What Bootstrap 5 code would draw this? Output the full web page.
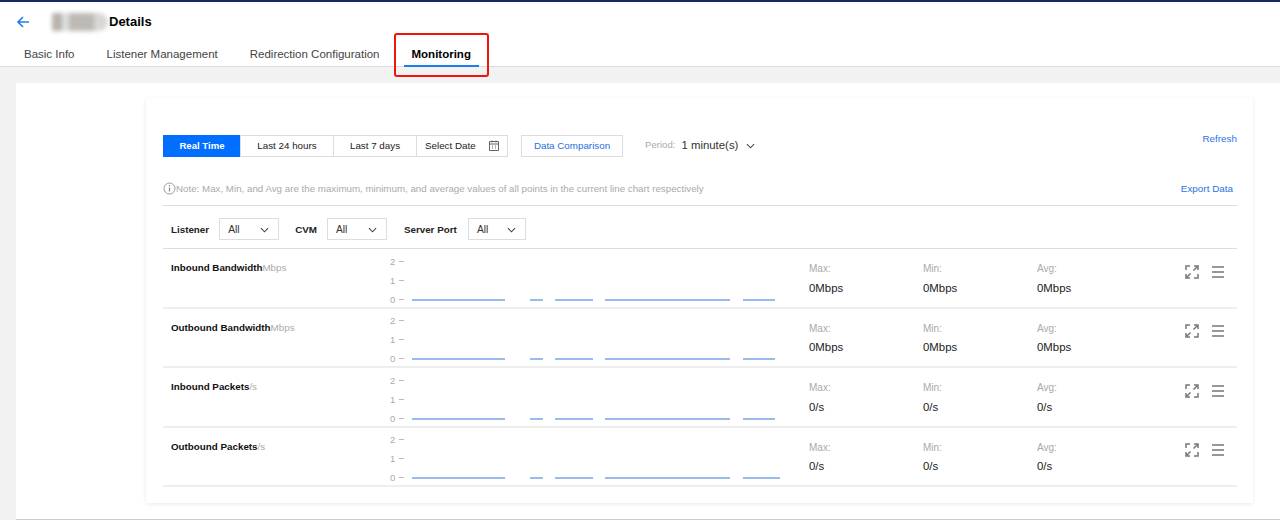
<!DOCTYPE html>
<html lang="en">
<head>
    <meta charset="UTF-8">
    <title>Details</title>
    <link href="https://cdn.jsdelivr.net/npm/bootstrap@5.3.0/dist/css/bootstrap.min.css" rel="stylesheet">
    <style>
        html, body { height: 520px; overflow: hidden; }
        body {
            background: #f2f2f2;
            font-family: "Liberation Sans", Arial, sans-serif;
            font-size: 11.4px;
            color: #000;
        }
        .top-head { height: 67px; background: #fff; border-top: 2px solid #1b2a5e; border-bottom: 1px solid #dcdcdc; }
        .title-line { height: 39px; padding-left: 16px; padding-top: 1px; }
        .back-arrow { width: 14px; height: 14px; margin-right: 22px; }
        .blur-name { width: 56px; height: 18px; border-radius: 2px 9px 9px 2px; background: linear-gradient(90deg, #b8b2ad 0 18%, #dde0df 18% 30%, #bdb9b5 30% 75%, #d9d7d5 75%); filter: blur(2px); }
        .page-title { font-size: 13px; font-weight: 700; margin-left: 1px; }
        .tab-row { padding-left: 16px; gap: 16px; font-size: 11.5px; }
        .tab-item { padding: 0 8px; height: 26px; line-height: 27px; color: #444; position: relative; white-space: nowrap; }
        .tab-item.on { color: #000; font-weight: 700; border-bottom: 2px solid #1f7cf0; }
        .tab-item.on::after {
            content: "";
            position: absolute;
            left: -10px; right: -10px; top: -8px; bottom: -12px;
            border: 2px solid #f2140c;
            border-radius: 3px;
        }
        .page-panel { margin: 16px 0 0 16px; height: 437px; background: #fff; border-bottom: 1px solid #ccc; padding: 15px 27px 15px 130px; }
        .chart-card { height: 405px; background: #fff; box-shadow: 0 1px 4px rgba(0, 0, 0, .09); padding: 37px 16px 0 17px; }
        .range-btn { height: 22px; line-height: 19px; border: 1px solid #ddd; margin-left: -1px; text-align: center; color: #222; font-size: 9.8px; background: #fff; }
        .range-btn.on { background: #006eff; border-color: #006eff; color: #fff; font-weight: 700; margin-left: 0; font-size: 9.6px; }
        .w-a { width: 78px; } .w-b { width: 94px; } .w-c { width: 84px; } .w-d { width: 92px; padding: 0 8px 2px; }
        .cmp-btn { width: 102px; height: 22px; line-height: 19px; border: 1px solid #ddd; text-align: center; color: #1f6fdc; font-size: 9.8px; margin-left: 13px; }
        .period-wrap { margin-left: 22px; color: #333; padding-top: 2px; }
        .period-wrap span { color: #aaa; font-size: 9.6px; margin-right: 6px; }
        .link-blue { color: #2a73e0; font-size: 9.9px; }
        .refresh-link { margin-top: -3px; }
        .note-row { height: 38px; margin-top: 11px; padding-top: 14px; border-bottom: 1px solid #ddd; color: #aaa; font-size: 9.75px; padding-right: 4px; }
        .filter-row { height: 43px; padding: 12px 0 0 8px; border-bottom: 1px solid #ddd; font-size: 10.3px; }
        .filter-name { font-weight: 700; color: #222; margin-right: 10px; font-size: 9.8px; padding-top: 5px; }
        .sel-box { height: 22px; border: 1px solid #ddd; padding: 1px 9px 0 8px; color: #333; margin-right: 16px; }
        .sel-mid { margin-right: 17px; }
        .metric-row { height: 59.5px; border-bottom: 2px solid #eee; padding: 11px 12px 0 8px; }
        .metric-name { width: 214px; font-size: 9.8px; font-weight: 700; color: #111; white-space: nowrap; padding-top: 1px; }
        .metric-name span { font-weight: 400; color: #aaa; }
        .metric-plot { width: 419px; height: 48px; margin: -3.500px 5px 0 0; display: block; }
        .metric-plot text { font-size: 9.5px; fill: #aaa; }
        .stat-col { width: 114px; color: #222; }
        .stat-col div:first-child { color: #aaa; font-size: 10px; margin-bottom: 3.500px; padding-top: 1px; }
        .metric-tools { margin-left: auto; gap: 12px; padding-top: 4.500px; }
    </style>
</head>
<body>
    <svg width="0" height="0" class="position-absolute">
        <symbol id="axis" viewBox="0 0 419 48">
            <path d="M14 4.500h5M14 23.500h5M14 42.500h5" stroke="#bbb" stroke-width="1"/>
        </symbol>
        <symbol id="line-a" viewBox="0 0 419 48">
            <path d="M27 43h93M145 43h13M170 43h38M220 43h125M358 43h32" stroke="#7aa7e6" stroke-width="1.500"/>
        </symbol>
        <symbol id="line-b" viewBox="0 0 419 48">
            <path d="M27 43h93M145 43h13M170 43h38M220 43h125M358 43h37" stroke="#7aa7e6" stroke-width="1.500"/>
        </symbol>
        <symbol id="grow" viewBox="0 0 14 14">
            <path d="M1 5V1h4M9 1h4v4M13 9v4H9M5 13H1V9M8.500 5.500L12 2M5.500 8.500L2 12" fill="none" stroke="#777" stroke-width="1.500"/>
        </symbol>
        <symbol id="bars" viewBox="0 0 14 14">
            <path d="M1 2h12M1 7h12M1 12h12" fill="none" stroke="#777" stroke-width="1.300"/>
        </symbol>
        <symbol id="chev" viewBox="0 0 10 6">
            <path d="M1 1l4 4 4-4" fill="none" stroke="#444" stroke-width="1.200"/>
        </symbol>
    </svg>

    <div class="top-head">
        <div class="title-line d-flex align-items-center">
            <svg class="back-arrow" viewBox="0 0 14 14"><path d="M13 7H2M7 2L2 7l5 5" fill="none" stroke="#1f7cf0" stroke-width="1.600"/></svg>
            <div class="blur-name"></div>
            <div class="page-title">Details</div>
        </div>
        <div class="tab-row d-flex">
            <div class="tab-item">Basic Info</div>
            <div class="tab-item">Listener Management</div>
            <div class="tab-item">Redirection Configuration</div>
            <div class="tab-item on">Monitoring</div>
        </div>
    </div>

    <div class="page-panel">
        <div class="chart-card">
            <div class="d-flex align-items-start">
                <div class="range-btn on w-a">Real Time</div>
                <div class="range-btn w-b">Last 24 hours</div>
                <div class="range-btn w-c">Last 7 days</div>
                <div class="range-btn w-d d-flex justify-content-between align-items-center">
                    Select Date
                    <svg width="10" height="11" viewBox="0 0 10 11"><path d="M.5 1.500h9v9h-9zM.5 4h9M3 .5v2M7 .5v2M3 6h1M6 6h1M3 8h1M6 8h1" fill="none" stroke="#666"/></svg>
                </div>
                <div class="cmp-btn">Data Comparison</div>
                <div class="period-wrap d-flex align-items-center">
                    <span>Period:</span>1 minute(s)
                    <svg class="ms-2" width="9" height="6"><use href="#chev"/></svg>
                </div>
                <div class="link-blue refresh-link ms-auto">Refresh</div>
            </div>

            <div class="note-row d-flex justify-content-between">
                <div class="d-flex">
                    <svg width="13" height="13" viewBox="0 0 13 13"><circle cx="6.500" cy="6.500" r="5.500" fill="none" stroke="#999"/><path d="M6.500 5.500v4M6.500 3v1.300" stroke="#888" stroke-width="1.200"/></svg>
                    <div>Note: Max, Min, and Avg are the maximum, minimum, and average values of all points in the current line chart respectively</div>
                </div>
                <div class="link-blue">Export Data</div>
            </div>

            <div class="filter-row d-flex align-items-start">
                <div class="filter-name">Listener</div>
                <div class="sel-box d-flex justify-content-between align-items-center" style="width:60px">All<svg width="9" height="6"><use href="#chev"/></svg></div>
                <div class="filter-name">CVM</div>
                <div class="sel-box sel-mid d-flex justify-content-between align-items-center" style="width:60px">All<svg width="9" height="6"><use href="#chev"/></svg></div>
                <div class="filter-name me-2" style="width:56px">Server Port</div>
                <div class="sel-box d-flex justify-content-between align-items-center" style="width:58px">All<svg width="9" height="6"><use href="#chev"/></svg></div>
            </div>

            <div class="metric-row d-flex">
                <div class="metric-name">Inbound Bandwidth<span>Mbps</span></div>
                <svg class="metric-plot"><text x="5" y="8">2</text><text x="5" y="27">1</text><text x="5" y="46">0</text><use href="#axis"/><use href="#line-a"/></svg>
                <div class="stat-col"><div>Max:</div><div>0Mbps</div></div>
                <div class="stat-col"><div>Min:</div><div>0Mbps</div></div>
                <div class="stat-col"><div>Avg:</div><div>0Mbps</div></div>
                <div class="metric-tools d-flex">
                    <svg width="14" height="14"><use href="#grow"/></svg>
                    <svg width="14" height="14"><use href="#bars"/></svg>
                </div>
            </div>
            <div class="metric-row d-flex">
                <div class="metric-name">Outbound Bandwidth<span>Mbps</span></div>
                <svg class="metric-plot"><text x="5" y="8">2</text><text x="5" y="27">1</text><text x="5" y="46">0</text><use href="#axis"/><use href="#line-a"/></svg>
                <div class="stat-col"><div>Max:</div><div>0Mbps</div></div>
                <div class="stat-col"><div>Min:</div><div>0Mbps</div></div>
                <div class="stat-col"><div>Avg:</div><div>0Mbps</div></div>
                <div class="metric-tools d-flex">
                    <svg width="14" height="14"><use href="#grow"/></svg>
                    <svg width="14" height="14"><use href="#bars"/></svg>
                </div>
            </div>
            <div class="metric-row d-flex">
                <div class="metric-name">Inbound Packets<span>/s</span></div>
                <svg class="metric-plot"><text x="5" y="8">2</text><text x="5" y="27">1</text><text x="5" y="46">0</text><use href="#axis"/><use href="#line-a"/></svg>
                <div class="stat-col"><div>Max:</div><div>0/s</div></div>
                <div class="stat-col"><div>Min:</div><div>0/s</div></div>
                <div class="stat-col"><div>Avg:</div><div>0/s</div></div>
                <div class="metric-tools d-flex">
                    <svg width="14" height="14"><use href="#grow"/></svg>
                    <svg width="14" height="14"><use href="#bars"/></svg>
                </div>
            </div>
            <div class="metric-row d-flex">
                <div class="metric-name">Outbound Packets<span>/s</span></div>
                <svg class="metric-plot"><text x="5" y="8">2</text><text x="5" y="27">1</text><text x="5" y="46">0</text><use href="#axis"/><use href="#line-b"/></svg>
                <div class="stat-col"><div>Max:</div><div>0/s</div></div>
                <div class="stat-col"><div>Min:</div><div>0/s</div></div>
                <div class="stat-col"><div>Avg:</div><div>0/s</div></div>
                <div class="metric-tools d-flex">
                    <svg width="14" height="14"><use href="#grow"/></svg>
                    <svg width="14" height="14"><use href="#bars"/></svg>
                </div>
            </div>
        </div>
    </div>
    <script src="https://cdn.jsdelivr.net/npm/bootstrap@5.3.0/dist/js/bootstrap.bundle.min.js"></script>
</body>
</html>
